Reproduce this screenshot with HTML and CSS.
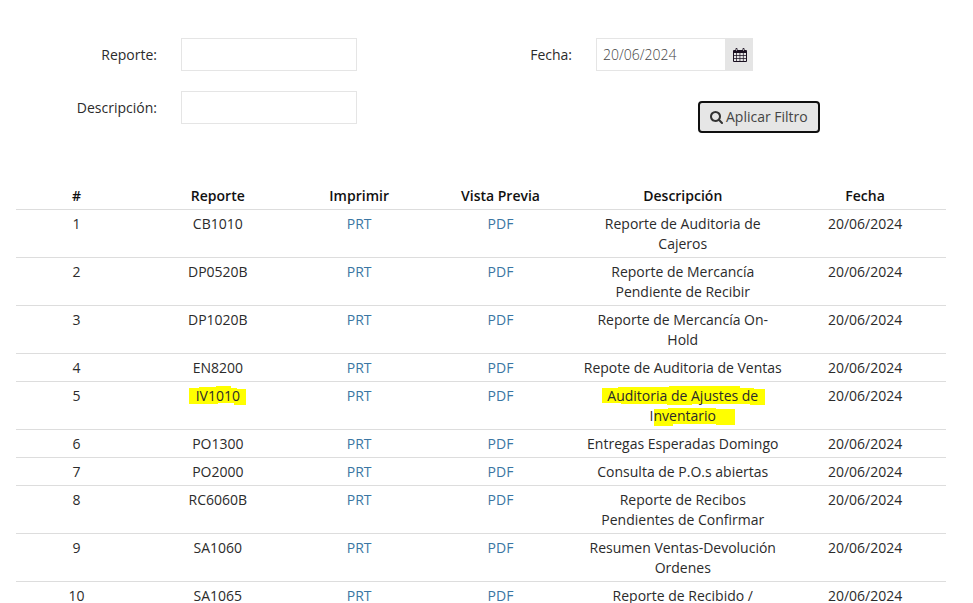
FILE: index.html
```
<!DOCTYPE html>
<html lang="es">
<head>
    <meta charset="UTF-8">
    <meta name="viewport" content="width=device-width, initial-scale=1.0">
    <title>Reportes</title>
    <link rel="stylesheet" href="styles.css">
</head>
<body>
    <form class="filters">
        <label for="reporte">Reporte:</label>
        <input type="text" id="reporte" name="reporte">

        <label for="fecha">Fecha:</label>
        <div class="date-group">
            <input type="text" id="fecha" name="fecha" value="20/06/2024">
            <button type="button" class="date-button" aria-label="Abrir calendario">
                <svg width="14" height="14" viewBox="0 0 14 14">
                    <path fill="#1a1020" fill-rule="evenodd" d="M1 2h1.500V1q0-1 1-1t1 1v1h5V1q0-1 1-1t1 1v1H13q1 0 1 1v10q0 1-1 1H1q-1 0-1-1V3q0-1 1-1zM1 5v2h2.300V5zM4 5v2h2.600V5zM7.300 5v2h2.600V5zM10.600 5v2H13V5zM1 7.700v2.300h2.300V7.700zM4 7.700v2.300h2.600V7.700zM7.300 7.700v2.300h2.600V7.700zM10.600 7.700v2.300H13V7.700zM1 10.700V13h2.300v-2.300zM4 10.700V13h2.600v-2.300zM7.300 10.700V13h2.600v-2.300zM10.600 10.700V13H13v-2.300zM3.200 1v2h.6V1zM10.200 1v2h.6V1z"/>
                </svg>
            </button>
        </div>

        <label for="descripcion">Descripción:</label>
        <input type="text" id="descripcion" name="descripcion">

        <div class="actions">
            <button type="button" class="apply-button">
                <svg width="13" height="14" viewBox="0 0 1664 1792">
                    <path fill="currentColor" d="M1152 832q0-185-131.500-316.500t-316.500-131.500-316.500 131.500-131.500 316.500 131.500 316.500 316.500 131.500 316.500-131.500 131.500-316.500zm512 832q0 52-38 90t-90 38q-54 0-90-38l-343-342q-179 124-399 124-143 0-273.500-55.500t-225-150-150-225-55.500-273.500 55.500-273.500 150-225 225-150 273.500-55.500 273.500 55.500 225 150 150 225 55.500 273.500q0 220-124 399l343 343q37 37 37 90z"/>
                </svg>
                Aplicar Filtro
            </button>
        </div>
    </form>

    <table class="reports">
        <colgroup>
            <col class="col-small">
            <col class="col-medium">
            <col class="col-small">
            <col class="col-medium">
            <col class="col-large">
            <col class="col-medium">
        </colgroup>
        <thead>
            <tr><th>#</th><th>Reporte</th><th>Imprimir</th><th>Vista Previa</th><th>Descripción</th><th>Fecha</th></tr>
        </thead>
        <tbody>
            <tr>
                <td>1</td><td>CB1010</td>
                <td><a href="#">PRT</a></td><td><a href="#">PDF</a></td>
                <td>Reporte de Auditoria de Cajeros</td><td>20/06/2024</td>
            </tr>
            <tr>
                <td>2</td><td>DP0520B</td>
                <td><a href="#">PRT</a></td><td><a href="#">PDF</a></td>
                <td>Reporte de Mercancía Pendiente de Recibir</td><td>20/06/2024</td>
            </tr>
            <tr>
                <td>3</td><td>DP1020B</td>
                <td><a href="#">PRT</a></td><td><a href="#">PDF</a></td>
                <td>Reporte de Mercancía On-Hold</td><td>20/06/2024</td>
            </tr>
            <tr>
                <td>4</td><td>EN8200</td>
                <td><a href="#">PRT</a></td><td><a href="#">PDF</a></td>
                <td>Repote de Auditoria de Ventas</td><td>20/06/2024</td>
            </tr>
            <tr>
                <td>5</td>
                <td>
                    <div class="marked">
                        <svg class="marker" width="60" height="20" viewBox="0 0 60 20">
                            <path fill="#ff0" d="M1 2h10v-1h17V0h15v2h6v1h9v16H46v-2H30v1H1z"/>
                        </svg>
                        IV1010
                    </div>
                </td>
                <td><a href="#">PRT</a></td><td><a href="#">PDF</a></td>
                <td>
                    <div class="marked">
                        <svg class="marker" width="164" height="40" viewBox="0 0 164 40">
                            <path fill="#ff0" d="M1 2h16V1h51V0h71v2h14v1h11v16h-15v-1H91v1H66v-1H20v-1H1zM53 23h14v-1h48v1h19v16h-19v-1H72v2H53z"/>
                        </svg>
                        Auditoria de Ajustes de Inventario
                    </div>
                </td>
                <td>20/06/2024</td>
            </tr>
            <tr>
                <td>6</td><td>PO1300</td>
                <td><a href="#">PRT</a></td><td><a href="#">PDF</a></td>
                <td>Entregas Esperadas Domingo</td><td>20/06/2024</td>
            </tr>
            <tr>
                <td>7</td><td>PO2000</td>
                <td><a href="#">PRT</a></td><td><a href="#">PDF</a></td>
                <td>Consulta de P.O.s abiertas</td><td>20/06/2024</td>
            </tr>
            <tr>
                <td>8</td><td>RC6060B</td>
                <td><a href="#">PRT</a></td><td><a href="#">PDF</a></td>
                <td>Reporte de Recibos Pendientes de Confirmar</td><td>20/06/2024</td>
            </tr>
            <tr>
                <td>9</td><td>SA1060</td>
                <td><a href="#">PRT</a></td><td><a href="#">PDF</a></td>
                <td>Resumen Ventas-Devolución Ordenes</td><td>20/06/2024</td>
            </tr>
            <tr>
                <td>10</td><td>SA1065</td>
                <td><a href="#">PRT</a></td><td><a href="#">PDF</a></td>
                <td>Reporte de Recibido /</td><td>20/06/2024</td>
            </tr>
        </tbody>
    </table>
</body>
</html>
```
FILE: styles.css
```
* {
    box-sizing: border-box;
}
body {
    margin: 0;
    padding: 38px 27px 0 16px;
    background-color: #fff;
    color: #2b2b2b;
    font-family: "Open Sans", sans-serif;
    font-size: 14px;
    line-height: 20px;
}
input, button {
    font: inherit;
}
.filters {
    display: grid;
    grid-template-columns: 141fr 176fr 191fr 350fr;
    column-gap: 24px;
    row-gap: 20px;
    align-items: start;
    margin-bottom: 48px;
}
.filters label {
    padding: 7px 0 6px;
    text-align: right;
}
.filters input {
    width: 100%;
    min-width: 0;
    height: 33px;
    padding: 6px;
    border: 1px solid #e5e5e5;
    border-radius: 0;
    background-color: #fff;
    color: #444;
    font-weight: 300;
}
.date-group {
    display: flex;
    width: 157px;
}
.date-button {
    display: flex;
    flex: none;
    align-items: center;
    justify-content: center;
    width: 27px;
    padding: 0;
    border: none;
    background-color: #e5e5e5;
    cursor: pointer;
}
.actions {
    grid-column: 4;
    padding: 10px 0 0 102px;
}
.apply-button {
    display: flex;
    align-items: center;
    gap: 3px;
    height: 32px;
    padding: 4px 10px;
    border: 2px solid #101010;
    border-radius: 4px;
    background-color: #e6e6e6;
    color: #444;
    white-space: nowrap;
    cursor: pointer;
}
.apply-button svg {
    color: #333;
}
.reports {
    width: 100%;
    table-layout: fixed;
    border-spacing: 0;
    text-align: center;
}
.col-small {
    width: 13%;
}
.col-medium {
    width: 17.4%;
}
.col-large {
    width: 21.8%;
}
.reports th, .reports td {
    padding: 4px 2px 3px;
    border-top: 1px solid #ddd;
    vertical-align: top;
}
.reports th {
    border-top-color: transparent;
    color: #111;
    font-weight: 600;
}
.reports a {
    color: #3a76a3;
    text-decoration: none;
}
.marked {
    position: relative;
    z-index: 0;
}
/* highlighter strokes behind the text */
.marker {
    position: absolute;
    z-index: -1;
    top: 0;
    left: 50%;
    transform: translateX(-50%);
}
```
